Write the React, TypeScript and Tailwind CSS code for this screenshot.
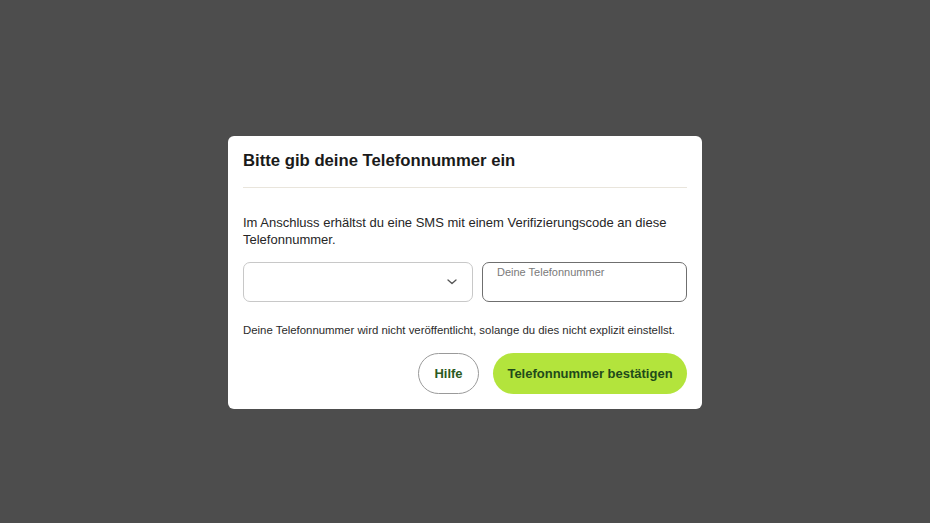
import React from 'react';

const App: React.FC = () => {
  return (
    <div className="w-[930px] h-[523px] bg-[#4d4d4d] flex justify-center pt-[136px] font-['Liberation_Sans',Arial,sans-serif]">
      <div className="w-[474px] h-[273px] bg-white rounded-[6px] px-[15px] pt-[14px] flex flex-col">
        <h2 className="text-[16.7px] font-bold text-[#1a1a1a] leading-[22px]">
          Bitte gib deine Telefonnummer ein
        </h2>
        <div className="mt-[15px] border-t border-[#e9e5dc]"></div>

        <p className="mt-[26px] text-[13px] leading-[17px] text-[#262626]">
          Im Anschluss erhältst du eine SMS mit einem Verifizierungscode an diese Telefonnummer.
        </p>

        <div className="mt-[14px] flex gap-[9px]">
          <div className="w-[230px] h-[40px] rounded-[7px] border border-[#c8c8c8] flex items-center justify-end pr-[15px]">
            <svg width="10" height="6" viewBox="0 0 10 6" fill="none">
              <path d="M1 1 L5 4.6 L9 1" stroke="#555" strokeWidth="1.3" strokeLinecap="round" strokeLinejoin="round" />
            </svg>
          </div>
          <div className="flex-1 h-[40px] rounded-[7px] border-[1.5px] border-[#6f6f6f] px-[14px] pt-[2px]">
            <span className="block text-[11px] leading-[14px] text-[#7a7a7a]">Deine Telefonnummer</span>
          </div>
        </div>

        <p className="mt-[21px] text-[11.4px] leading-[14px] text-[#2b2b2b]">
          Deine Telefonnummer wird nicht veröffentlicht, solange du dies nicht explizit einstellst.
        </p>

        <div className="mt-[16px] flex justify-end gap-[14px]">
          <button className="w-[61px] h-[41px] rounded-full border-[1.5px] border-[#9a9a9a] text-[13px] font-bold text-[#2a5a22]">
            Hilfe
          </button>
          <button className="w-[194px] h-[41px] rounded-full bg-[#b3e43c] text-[13px] font-bold text-[#1f4a1a]">
            Telefonnummer bestätigen
          </button>
        </div>
      </div>
    </div>
  );
};

export default App;
